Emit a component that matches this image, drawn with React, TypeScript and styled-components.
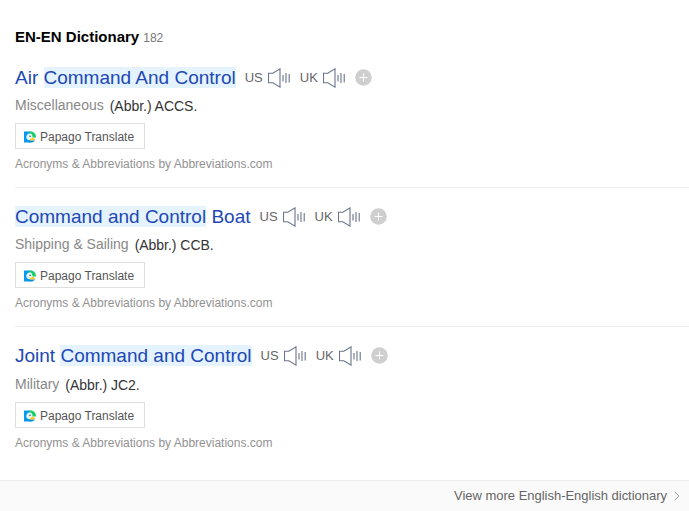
import React from "react";
import styled, { createGlobalStyle } from "styled-components";

const GlobalStyle = createGlobalStyle`
  * { box-sizing: border-box; }
  body { margin: 0; background: #fff; font-family: "Liberation Sans", Arial, sans-serif; }
`;

const Page = styled.main`
  height: 511px;
  display: flex;
  flex-direction: column;
  overflow: hidden;
`;

const Header = styled.header`
  display: flex;
  align-items: baseline;
  gap: 4px;
  height: 49px;
  padding: 28px 0 0 15px;
`;

const Heading = styled.h2`
  margin: 0;
  font-size: 15px;
  line-height: 18px;
  color: #000;
`;

const Count = styled.span`
  font-size: 12px;
  line-height: 18px;
  color: #777;
`;

const List = styled.div`
  flex: 1;
  padding-left: 15px;
`;

const Entry = styled.article<{ $height: number; $last?: boolean }>`
  height: ${(p) => p.$height}px;
  padding-top: 17px;
  border-bottom: ${(p) => (p.$last ? "none" : "1px solid #ededed")};
`;

const TitleRow = styled.div`
  display: flex;
  align-items: center;
  height: 23px;
  white-space: nowrap;
`;

const Title = styled.a`
  font-size: 19px;
  line-height: 23px;
  color: #2148b4;
  margin-right: 9px;
`;

const Mark = styled.mark`
  background: #e4f3fd;
  color: inherit;
`;

const Voice = styled.span`
  display: flex;
  align-items: center;
  gap: 5px;
  margin-right: 9px;
  font-size: 13px;
  line-height: 20px;
  color: #666;

  svg { display: block; }
`;

const AddButton = styled.button`
  display: block;
  width: 17px;
  height: 17px;
  padding: 0;
  border: 0;
  background: none;

  svg { display: block; }
`;

const Meaning = styled.p<{ $top: number }>`
  display: flex;
  gap: 6px;
  margin: ${(p) => p.$top}px 0 0;
  height: 18px;
  font-size: 14px;
  line-height: 18px;
  color: #333;
`;

const Field = styled.span`
  color: #888;
`;

const Definition = styled.span`
  padding-top: 1px;
  letter-spacing: -0.03px;
`;

const Translate = styled.button`
  display: flex;
  align-items: center;
  gap: 4px;
  width: 130px;
  height: 26px;
  margin-top: 9px;
  padding: 1px 0 0 8px;
  border: 1px solid #dfdfdf;
  background: #fff;
  font: 12px "Liberation Sans", Arial, sans-serif;
  color: #555;
  white-space: nowrap;
`;

const Source = styled.p`
  margin: 7px 0 0;
  font-size: 12px;
  line-height: 16px;
  color: #929292;
`;

const Footer = styled.footer`
  display: flex;
  justify-content: flex-end;
  align-items: center;
  gap: 7px;
  height: 31px;
  padding: 0 9px 2px 0;
  border-top: 1px solid #ececec;
  background: #fafafa;
  font-size: 13px;
  letter-spacing: -0.02px;
  color: #666;

  svg { margin-top: 1px; }
`;

const Speaker = () => (
  <svg width="23" height="20" viewBox="0 0 23 20" fill="none" stroke="#69738a" strokeWidth="1.1">
    <path d="M.5 5.3H4.8L12 .9V19.1L4.8 14.7H.5Z" />
    <path d="M15 7V13.5M18 5V15M21.2 6V14.5" />
  </svg>
);

const Plus = () => (
  <svg width="17" height="17" viewBox="0 0 17 17">
    <circle cx="8.5" cy="8.5" r="8.3" fill="#cfcfcf" />
    <path d="M4.5 8.5H12.5M8.5 4.5V12.5" stroke="#fff" />
  </svg>
);

const Papago = () => (
  <svg width="12" height="12" viewBox="0 0 12 12">
    <path d="M0 .5H6.5V11.5H0Z" fill="#0799ed" />
    <path d="M5 .5H6.5C10 .5 12 3 12 6.5H7Z" fill="#16ce68" />
    <path d="M2.3 6C2.5 3.7 4 2.4 6 2.6C7.8 2.8 8.5 4.2 8.6 6.3L6 9.2C3.5 9.3 2.2 8 2.3 6Z" fill="#e4fbfa" />
    <path d="M5.5 8.2L9.5 6.6L11.5 9.3L6 9.8Z" fill="#ffc928" />
    <path d="M4.5 9.7L11 9.4C9.8 11.1 8 11.5 5.5 11.5Z" fill="#078bd4" />
    <circle cx="6" cy="5.3" r=".75" fill="#26465a" />
  </svg>
);

const Chevron = () => (
  <svg width="6" height="10" viewBox="0 0 6 10" fill="none" stroke="#999">
    <path d="M.7 .8L4.9 5L.7 9.2" />
  </svg>
);

const entries = [
  { before: "Air ", mark: "Command And Control", after: "", field: "Miscellaneous", def: "(Abbr.) ACCS.", height: 139, top: 7 },
  { before: "", mark: "Command and Control", after: " Boat", field: "Shipping & Sailing", def: "(Abbr.) CCB.", height: 139, top: 7 },
  { before: "Joint ", mark: "Command and Control", after: "", field: "Military", def: "(Abbr.) JC2.", height: 140, top: 8 },
];

export default function App() {
  return (
    <>
      <GlobalStyle />
      <Page>
        <Header>
          <Heading>EN-EN Dictionary</Heading>
          <Count>182</Count>
        </Header>
        <List>
          {entries.map((e, i) => (
            <Entry key={e.field} $height={e.height} $last={i === entries.length - 1}>
              <TitleRow>
                <Title>{e.before}<Mark>{e.mark}</Mark>{e.after}</Title>
                <Voice>US <Speaker /></Voice>
                <Voice>UK <Speaker /></Voice>
                <AddButton aria-label="Add"><Plus /></AddButton>
              </TitleRow>
              <Meaning $top={e.top}>
                <Field>{e.field}</Field>
                <Definition>{e.def}</Definition>
              </Meaning>
              <Translate><Papago />Papago Translate</Translate>
              <Source>Acronyms &amp; Abbreviations by Abbreviations.com</Source>
            </Entry>
          ))}
        </List>
        <Footer>View more English-English dictionary <Chevron /></Footer>
      </Page>
    </>
  );
}
